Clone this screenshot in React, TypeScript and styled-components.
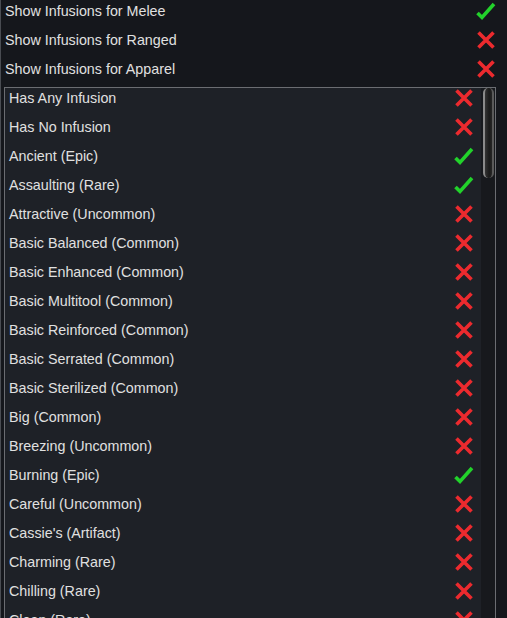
import React from 'react';
import styled, { createGlobalStyle } from 'styled-components';

const GlobalStyle = createGlobalStyle`
  html, body {
    margin: 0;
    padding: 0;
    background: #15171c;
  }
  body {
    font-family: "Liberation Sans", Arial, sans-serif;
  }
`;

const Window = styled.div`
  width: 507px;
  height: 618px;
  box-sizing: border-box;
  overflow: hidden;
  border-left: 1px solid #494c52;
  padding: 1px 11px 0 3px;
  display: flex;
  flex-direction: column;
`;

const Row = styled.div<{ $inset: number }>`
  display: flex;
  align-items: flex-start;
  justify-content: space-between;
  height: 29px;
  flex-shrink: 0;
  padding-left: ${({ $inset }) => $inset}px;
`;

const Label = styled.span`
  font-size: 14.3px;
  line-height: 20px;
  color: #e0e0e0;
  white-space: nowrap;
`;

const ListBox = styled.div`
  margin-top: -1px;
  height: 560px;
  flex-shrink: 0;
  border: 1px solid #6b6d72;
  background: #1e2127;
  display: flex;
`;

const ListBody = styled.div`
  flex: 1;
  display: flex;
  flex-direction: column;
  padding-right: 7px;
`;

const ScrollTrack = styled.div`
  width: 14px;
  background: #17191d;
  display: flex;
  justify-content: center;
`;

const ScrollThumb = styled.div`
  width: 11px;
  height: 90px;
  box-sizing: border-box;
  border-radius: 5px;
  border-left: 2px solid #8a8a8a;
  border-right: 2px solid #5a5a5a;
  background: linear-gradient(90deg, #343434, #1a1a1a 60%, #262626);
`;

const IconBox = styled.svg`
  width: 20px;
  height: 20px;
  flex-shrink: 0;
`;

const Check = () => (
  <IconBox viewBox="0 0 20 20">
    <path d="M1.5 12 L6 16.5 L18 3" fill="none" stroke="#22d22b" strokeWidth="3.6" strokeLinejoin="miter" />
  </IconBox>
);

const Cross = () => (
  <IconBox viewBox="0 0 20 20">
    <path d="M2.5 2.5 L17.5 17.5 M17.5 2.5 L2.5 17.5" fill="none" stroke="#ec2a2e" strokeWidth="3.6" />
  </IconBox>
);

const toggles: [string, boolean][] = [
  ['Show Infusions for Melee', true],
  ['Show Infusions for Ranged', false],
  ['Show Infusions for Apparel', false],
];

const infusions: [string, boolean][] = [
  ['Has Any Infusion', false],
  ['Has No Infusion', false],
  ['Ancient (Epic)', true],
  ['Assaulting (Rare)', true],
  ['Attractive (Uncommon)', false],
  ['Basic Balanced (Common)', false],
  ['Basic Enhanced (Common)', false],
  ['Basic Multitool (Common)', false],
  ['Basic Reinforced (Common)', false],
  ['Basic Serrated (Common)', false],
  ['Basic Sterilized (Common)', false],
  ['Big (Common)', false],
  ['Breezing (Uncommon)', false],
  ['Burning (Epic)', true],
  ['Careful (Uncommon)', false],
  ["Cassie's (Artifact)", false],
  ['Charming (Rare)', false],
  ['Chilling (Rare)', false],
  ['Clean (Rare)', false],
];

export default function App() {
  return (
    <>
      <GlobalStyle />
      <Window>
        {toggles.map(([name, on]) => (
          <Row key={name} $inset={1}>
            <Label>{name}</Label>
            {on ? <Check /> : <Cross />}
          </Row>
        ))}
        <ListBox>
          <ListBody>
            {infusions.map(([name, on]) => (
              <Row key={name} $inset={4}>
                <Label>{name}</Label>
                {on ? <Check /> : <Cross />}
              </Row>
            ))}
          </ListBody>
          <ScrollTrack>
            <ScrollThumb />
          </ScrollTrack>
        </ListBox>
      </Window>
    </>
  );
}
